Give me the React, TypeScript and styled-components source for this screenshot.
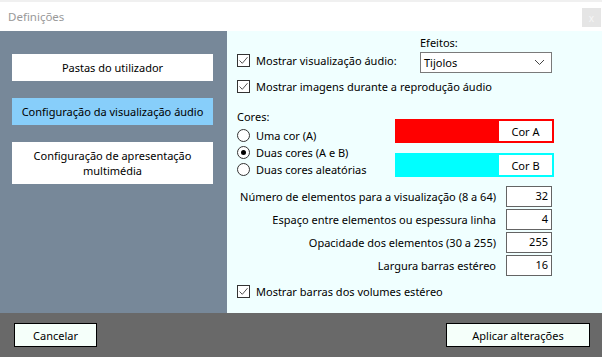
import React from "react";
import styled, { createGlobalStyle } from "styled-components";

const GlobalStyle = createGlobalStyle`
  html, body {
    margin: 0;
    padding: 0;
    width: 602px;
    height: 357px;
    overflow: hidden;
    background: #ffffff;
  }
  * {
    box-sizing: border-box;
  }
  body {
    font-family: "Noto Sans", "Open Sans", "Liberation Sans", sans-serif;
    font-size: 11px;
    color: #000;
  }
`;

const CheckMark: React.FC = () => (
  <svg width="11" height="11" viewBox="0 0 11 11">
    <path d="M1.5 5.5 L4.3 8.3 L9.5 2.2" fill="none" stroke="#555" strokeWidth="1" />
  </svg>
);

const App: React.FC = () => {
  return (
    <>
      <GlobalStyle />
      <Window>
        <TitleBar>
          <Title>Definições</Title>
          <CloseButton>x</CloseButton>
        </TitleBar>
        <Body>
          <SideMenu>
            <MenuButton>Pastas do utilizador</MenuButton>
            <MenuButton $active>Configuração da visualização áudio</MenuButton>
            <MenuButton $tall>
              Configuração de apresentação
              <br />
              multimédia
            </MenuButton>
          </SideMenu>
          <Content>
            <TopRow>
              <CheckRow $width={183}>
                <CheckBox>
                  <CheckMark />
                </CheckBox>
                <span>Mostrar visualização áudio:</span>
              </CheckRow>
              <EffectsGroup>
                <EffectsLabel>Efeitos:</EffectsLabel>
                <Select>
                  <span>Tijolos</span>
                  <svg width="11" height="7" viewBox="0 0 11 7">
                    <path d="M1 1 L5.5 5.5 L10 1" fill="none" stroke="#444" strokeWidth="1" />
                  </svg>
                </Select>
              </EffectsGroup>
            </TopRow>
            <CheckRow $top={5}>
              <CheckBox>
                <CheckMark />
              </CheckBox>
              <span>Mostrar imagens durante a reprodução áudio</span>
            </CheckRow>

            <ColorsSection>
              <RadioColumn>
                <SectionLabel>Cores:</SectionLabel>
                <RadioRow>
                  <Radio />
                  <span>Uma cor (A)</span>
                </RadioRow>
                <RadioRow>
                  <Radio $checked />
                  <span>Duas cores (A e B)</span>
                </RadioRow>
                <RadioRow>
                  <Radio />
                  <span>Duas cores aleatórias</span>
                </RadioRow>
              </RadioColumn>
              <SwatchColumn>
                <Swatch $color="#ff0000">
                  <SwatchButton>Cor A</SwatchButton>
                </Swatch>
                <Swatch $color="#00ffff">
                  <SwatchButton>Cor B</SwatchButton>
                </Swatch>
              </SwatchColumn>
            </ColorsSection>

            <NumberGrid>
              <NumberLabel>Número de elementos para a visualização (8 a 64)</NumberLabel>
              <NumberInput>32</NumberInput>
              <NumberLabel>Espaço entre elementos ou espessura linha</NumberLabel>
              <NumberInput>4</NumberInput>
              <NumberLabel>Opacidade dos elementos (30 a 255)</NumberLabel>
              <NumberInput>255</NumberInput>
              <NumberLabel>Largura barras estéreo</NumberLabel>
              <NumberInput>16</NumberInput>
            </NumberGrid>

            <CheckRow $top={7}>
              <CheckBox>
                <CheckMark />
              </CheckBox>
              <span>Mostrar barras dos volumes estéreo</span>
            </CheckRow>
          </Content>
        </Body>
        <Footer>
          <FooterButton $width={83}>Cancelar</FooterButton>
          <FooterButton $width={144}>Aplicar alterações</FooterButton>
        </Footer>
      </Window>
    </>
  );
};
export default App;

const Window = styled.div`
  width: 602px;
  height: 357px;
  display: flex;
  flex-direction: column;
`;

const TitleBar = styled.div`
  height: 31px;
  display: flex;
  align-items: center;
  justify-content: space-between;
  padding: 0 1px 0 8px;
  background: #ffffff;
  border-top: 2px solid #f0f0f0;
`;

const Title = styled.div`
  color: #999999;
  font-size: 11.5px;
`;

const CloseButton = styled.div`
  width: 19px;
  height: 19px;
  background: #e5e5e5;
  color: #f6f6f6;
  font-size: 10px;
  display: flex;
  align-items: center;
  justify-content: center;
  margin-top: 2px;
`;

const Body = styled.div`
  height: 282px;
  display: flex;
`;

const SideMenu = styled.div`
  width: 227px;
  background: #778899;
  padding: 23px 14px 0 12px;
  display: flex;
  flex-direction: column;
  gap: 17px;
`;

const MenuButton = styled.div<{ $active?: boolean; $tall?: boolean }>`
  height: ${(p) => (p.$tall ? "42px" : "27px")};
  background: ${(p) => (p.$active ? "#87cefa" : "#ffffff")};
  display: flex;
  align-items: center;
  justify-content: center;
  text-align: center;
  line-height: 15px;
`;

const Content = styled.div`
  flex: 1;
  background: #f0ffff;
  padding: 4px 0 0 10px;
  display: flex;
  flex-direction: column;
`;

const TopRow = styled.div`
  display: flex;
  align-items: flex-end;
`;

const CheckRow = styled.div<{ $width?: number; $top?: number }>`
  display: flex;
  align-items: center;
  gap: 6px;
  height: 16px;
  margin-top: ${(p) => p.$top ?? 0}px;
  margin-bottom: ${(p) => (p.$width ? "5px" : "0")};
  width: ${(p) => (p.$width ? `${p.$width}px` : "auto")};
`;

const CheckBox = styled.span`
  width: 13px;
  height: 13px;
  border: 1px solid #333333;
  background: #ffffff;
  display: flex;
  align-items: center;
  justify-content: center;
  flex-shrink: 0;
`;

const EffectsGroup = styled.div`
  display: flex;
  flex-direction: column;
`;

const EffectsLabel = styled.div`
  height: 17px;
`;

const Select = styled.div`
  width: 132px;
  height: 21px;
  border: 1px solid #7a7a7a;
  background: #ffffff;
  display: flex;
  align-items: center;
  justify-content: space-between;
  padding: 0 6px 0 3px;
`;

const ColorsSection = styled.div`
  display: flex;
  margin-top: 15px;
`;

const RadioColumn = styled.div`
  width: 158px;
  display: flex;
  flex-direction: column;
`;

const SectionLabel = styled.div`
  height: 16px;
  margin-bottom: 2px;
`;

const RadioRow = styled.div`
  display: flex;
  align-items: center;
  gap: 6px;
  height: 17px;
`;

const Radio = styled.span<{ $checked?: boolean }>`
  width: 13px;
  height: 13px;
  border-radius: 50%;
  border: 1px solid #333333;
  background: #ffffff;
  display: flex;
  align-items: center;
  justify-content: center;
  flex-shrink: 0;
  &::after {
    content: "";
    width: 5px;
    height: 5px;
    border-radius: 50%;
    background: ${(p) => (p.$checked ? "#000000" : "transparent")};
  }
`;

const SwatchColumn = styled.div`
  display: flex;
  flex-direction: column;
  gap: 10px;
  padding-top: 10px;
`;

const Swatch = styled.div<{ $color: string }>`
  width: 159px;
  height: 24px;
  border: 2px solid ${(p) => p.$color};
  background: ${(p) => p.$color};
  display: flex;
  justify-content: flex-end;
`;

const SwatchButton = styled.div`
  width: 53px;
  background: #ffffff;
  display: flex;
  align-items: center;
  justify-content: center;
`;

const NumberGrid = styled.div`
  display: grid;
  grid-template-columns: 259px 46px;
  column-gap: 10px;
  row-gap: 2px;
  margin-top: 8px;
  align-items: center;
`;

const NumberLabel = styled.div`
  text-align: right;
  white-space: nowrap;
`;

const NumberInput = styled.div`
  height: 21px;
  border: 1px solid #646464;
  background: #ffffff;
  text-align: right;
  padding: 1px 3px 0 0;
`;

const Footer = styled.div`
  flex: 1;
  background: #696969;
  display: flex;
  align-items: center;
  justify-content: space-between;
  padding: 0 12px 0 14px;
`;

const FooterButton = styled.div<{ $width: number }>`
  width: ${(p) => p.$width}px;
  height: 24px;
  background: #f5fffa;
  border: 1px solid #000000;
  display: flex;
  align-items: center;
  justify-content: center;
`;
